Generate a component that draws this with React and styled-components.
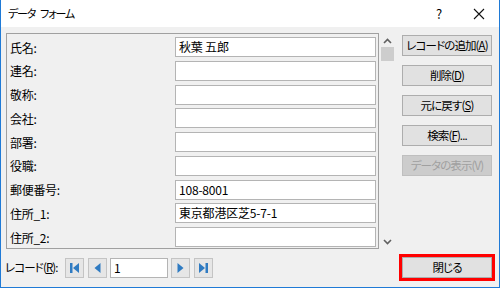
import React from 'react';
import styled, { createGlobalStyle } from 'styled-components';

const GlobalStyle = createGlobalStyle`
  html, body {
    margin: 0;
    padding: 0;
    background: #ffffff;
  }
  * {
    box-sizing: border-box;
  }
`;

const FONT = `"Noto Sans CJK JP", "Noto Sans", sans-serif`;

const Window = styled.div`
  width: 500px;
  height: 288px;
  display: flex;
  flex-direction: column;
  border: 1px solid #1f7ad6;
  border-top: none;
  background: #f0f0f0;
  font-family: ${FONT};
  font-size: 12px;
  font-feature-settings: "palt";
  color: #000;
  overflow: hidden;
`;

const TitleBar = styled.div`
  height: 27px;
  flex: none;
  display: flex;
  align-items: center;
  background: #ffffff;
  padding-left: 7px;
`;

const Title = styled.span`
  flex: 1;
  display: flex;
  gap: 5px;
  font-size: 11px;
  letter-spacing: -1.2px;
  line-height: 1;
`;

const TitleButton = styled.span`
  width: 40px;
  height: 27px;
  display: flex;
  align-items: center;
  justify-content: center;
  font-size: 13px;
`;

const Body = styled.div`
  flex: 1;
  display: grid;
  grid-template-columns: 373px 14px 90px;
  grid-template-rows: 216px 21px;
  column-gap: 1px;
  row-gap: 8px;
  padding: 6px 0 0 5px;
`;

const Frame = styled.div`
  border: 1px solid #a0a0a0;
  display: flex;
  flex-direction: column;
  gap: 3.75px;
  padding: 3px 2px 0 3px;
`;

const Row = styled.div`
  display: flex;
  align-items: center;
  height: 20px;
`;

const Label = styled.span`
  width: 165px;
  flex: none;
  letter-spacing: -0.3px;
`;

const Field = styled.div`
  width: 201px;
  height: 20px;
  background: #fff;
  border: 1px solid #b4b4b4;
  padding-left: 3px;
  display: flex;
  align-items: center;
  line-height: 1;
  white-space: nowrap;
  letter-spacing: -0.2px;
`;

const ScrollBar = styled.div`
  display: flex;
  flex-direction: column;
  align-items: center;
  padding-top: 5px;
`;

const Thumb = styled.div`
  width: 13px;
  height: 14px;
  margin-top: 3px;
  background: #cdcdcd;
  flex: none;
`;

const Spacer = styled.div`
  flex: 1;
`;

const ButtonColumn = styled.div`
  margin-left: 7px;
  display: flex;
  flex-direction: column;
  gap: 9px;
  padding-top: 2px;
`;

const Button = styled.div`
  width: 90px;
  height: 21px;
  display: flex;
  align-items: center;
  justify-content: center;
  background: ${({ disabled }) => (disabled ? '#cccccc' : '#e1e1e1')};
  border: 1px solid ${({ disabled }) => (disabled ? '#bfbfbf' : '#adadad')};
  color: ${({ disabled }) => (disabled ? '#a0a0a0' : '#000')};
  outline: ${({ highlight }) => (highlight ? '3px solid #ff0000' : 'none')};
  font-size: 11.5px;
  line-height: 1;
  white-space: nowrap;
  letter-spacing: -0.9px;
`;

const Key = styled.span`
  text-decoration: underline;
  text-underline-offset: 1px;
`;

const NavRow = styled.div`
  grid-column: 1 / 3;
  display: flex;
  align-items: center;
  gap: 4px;
`;

const NavLabel = styled.span`
  margin-left: -1px;
  width: 56px;
  flex: none;
  font-size: 11.5px;
  letter-spacing: -0.9px;
  line-height: 1;
  white-space: nowrap;
`;

const NavButton = styled.div`
  width: 19px;
  height: 20px;
  display: flex;
  align-items: center;
  justify-content: center;
  background: #e6e6e6;
  border: 1px solid #c4c4c4;
`;

const NavInput = styled(Field)`
  width: 58px;
  margin: 0 -1px;
`;

const CloseCell = styled.div`
  margin-left: 7px;
`;

const Chevron = ({ up }) => (
  <svg width="9" height="6" viewBox="0 0 9 6">
    <path
      d={up ? 'M1 5 L4.5 1.5 L8 5' : 'M1 1 L4.5 4.5 L8 1'}
      fill="none"
      stroke="#606060"
      strokeWidth="1.6"
    />
  </svg>
);

const NavIcon = ({ kind }) => {
  const blue = '#2f7bc2';
  return (
    <svg width="11" height="12" viewBox="0 0 11 12">
      {kind === 'first' && (
        <>
          <rect x="1" y="1" width="2.5" height="10" fill={blue} />
          <path d="M10 1 L4 6 L10 11 Z" fill={blue} />
        </>
      )}
      {kind === 'prev' && <path d="M8.5 1 L2.5 6 L8.5 11 Z" fill={blue} />}
      {kind === 'next' && <path d="M2.5 1 L8.5 6 L2.5 11 Z" fill={blue} />}
      {kind === 'last' && (
        <>
          <path d="M1 1 L7 6 L1 11 Z" fill={blue} />
          <rect x="7.5" y="1" width="2.5" height="10" fill={blue} />
        </>
      )}
    </svg>
  );
};

const CloseIcon = () => (
  <svg width="12" height="12" viewBox="0 0 12 12">
    <path d="M1 1 L11 11 M11 1 L1 11" stroke="#111" strokeWidth="1.1" />
  </svg>
);

const fields = [
  ['氏名:', '秋葉 五郎'],
  ['連名:', ''],
  ['敬称:', ''],
  ['会社:', ''],
  ['部署:', ''],
  ['役職:', ''],
  ['郵便番号:', '108-8001'],
  ['住所_1:', '東京都港区芝5-7-1'],
  ['住所_2:', ''],
];

export default function App() {
  return (
    <>
      <GlobalStyle />
      <Window>
        <TitleBar>
          <Title>
            <span>データ</span>
            <span>フォーム</span>
          </Title>
          <TitleButton>?</TitleButton>
          <TitleButton>
            <CloseIcon />
          </TitleButton>
        </TitleBar>
        <Body>
          <Frame>
            {fields.map(([label, value]) => (
              <Row key={label}>
                <Label>{label}</Label>
                <Field>{value}</Field>
              </Row>
            ))}
          </Frame>
          <ScrollBar>
            <Chevron up />
            <Thumb />
            <Spacer />
            <Chevron />
            <div style={{ height: 4 }} />
          </ScrollBar>
          <ButtonColumn>
            <Button>レコードの追加(<Key>A</Key>)</Button>
            <Button>削除(<Key>D</Key>)</Button>
            <Button>元に戻す(<Key>S</Key>)</Button>
            <Button>検索(<Key>F</Key>)...</Button>
            <Button disabled>データの表示(V)</Button>
          </ButtonColumn>
          <NavRow>
            <NavLabel>レコード(<Key>R</Key>):</NavLabel>
            <NavButton><NavIcon kind="first" /></NavButton>
            <NavButton><NavIcon kind="prev" /></NavButton>
            <NavInput>1</NavInput>
            <NavButton><NavIcon kind="next" /></NavButton>
            <NavButton><NavIcon kind="last" /></NavButton>
          </NavRow>
          <CloseCell>
            <Button highlight>閉じる</Button>
          </CloseCell>
        </Body>
      </Window>
    </>
  );
}
